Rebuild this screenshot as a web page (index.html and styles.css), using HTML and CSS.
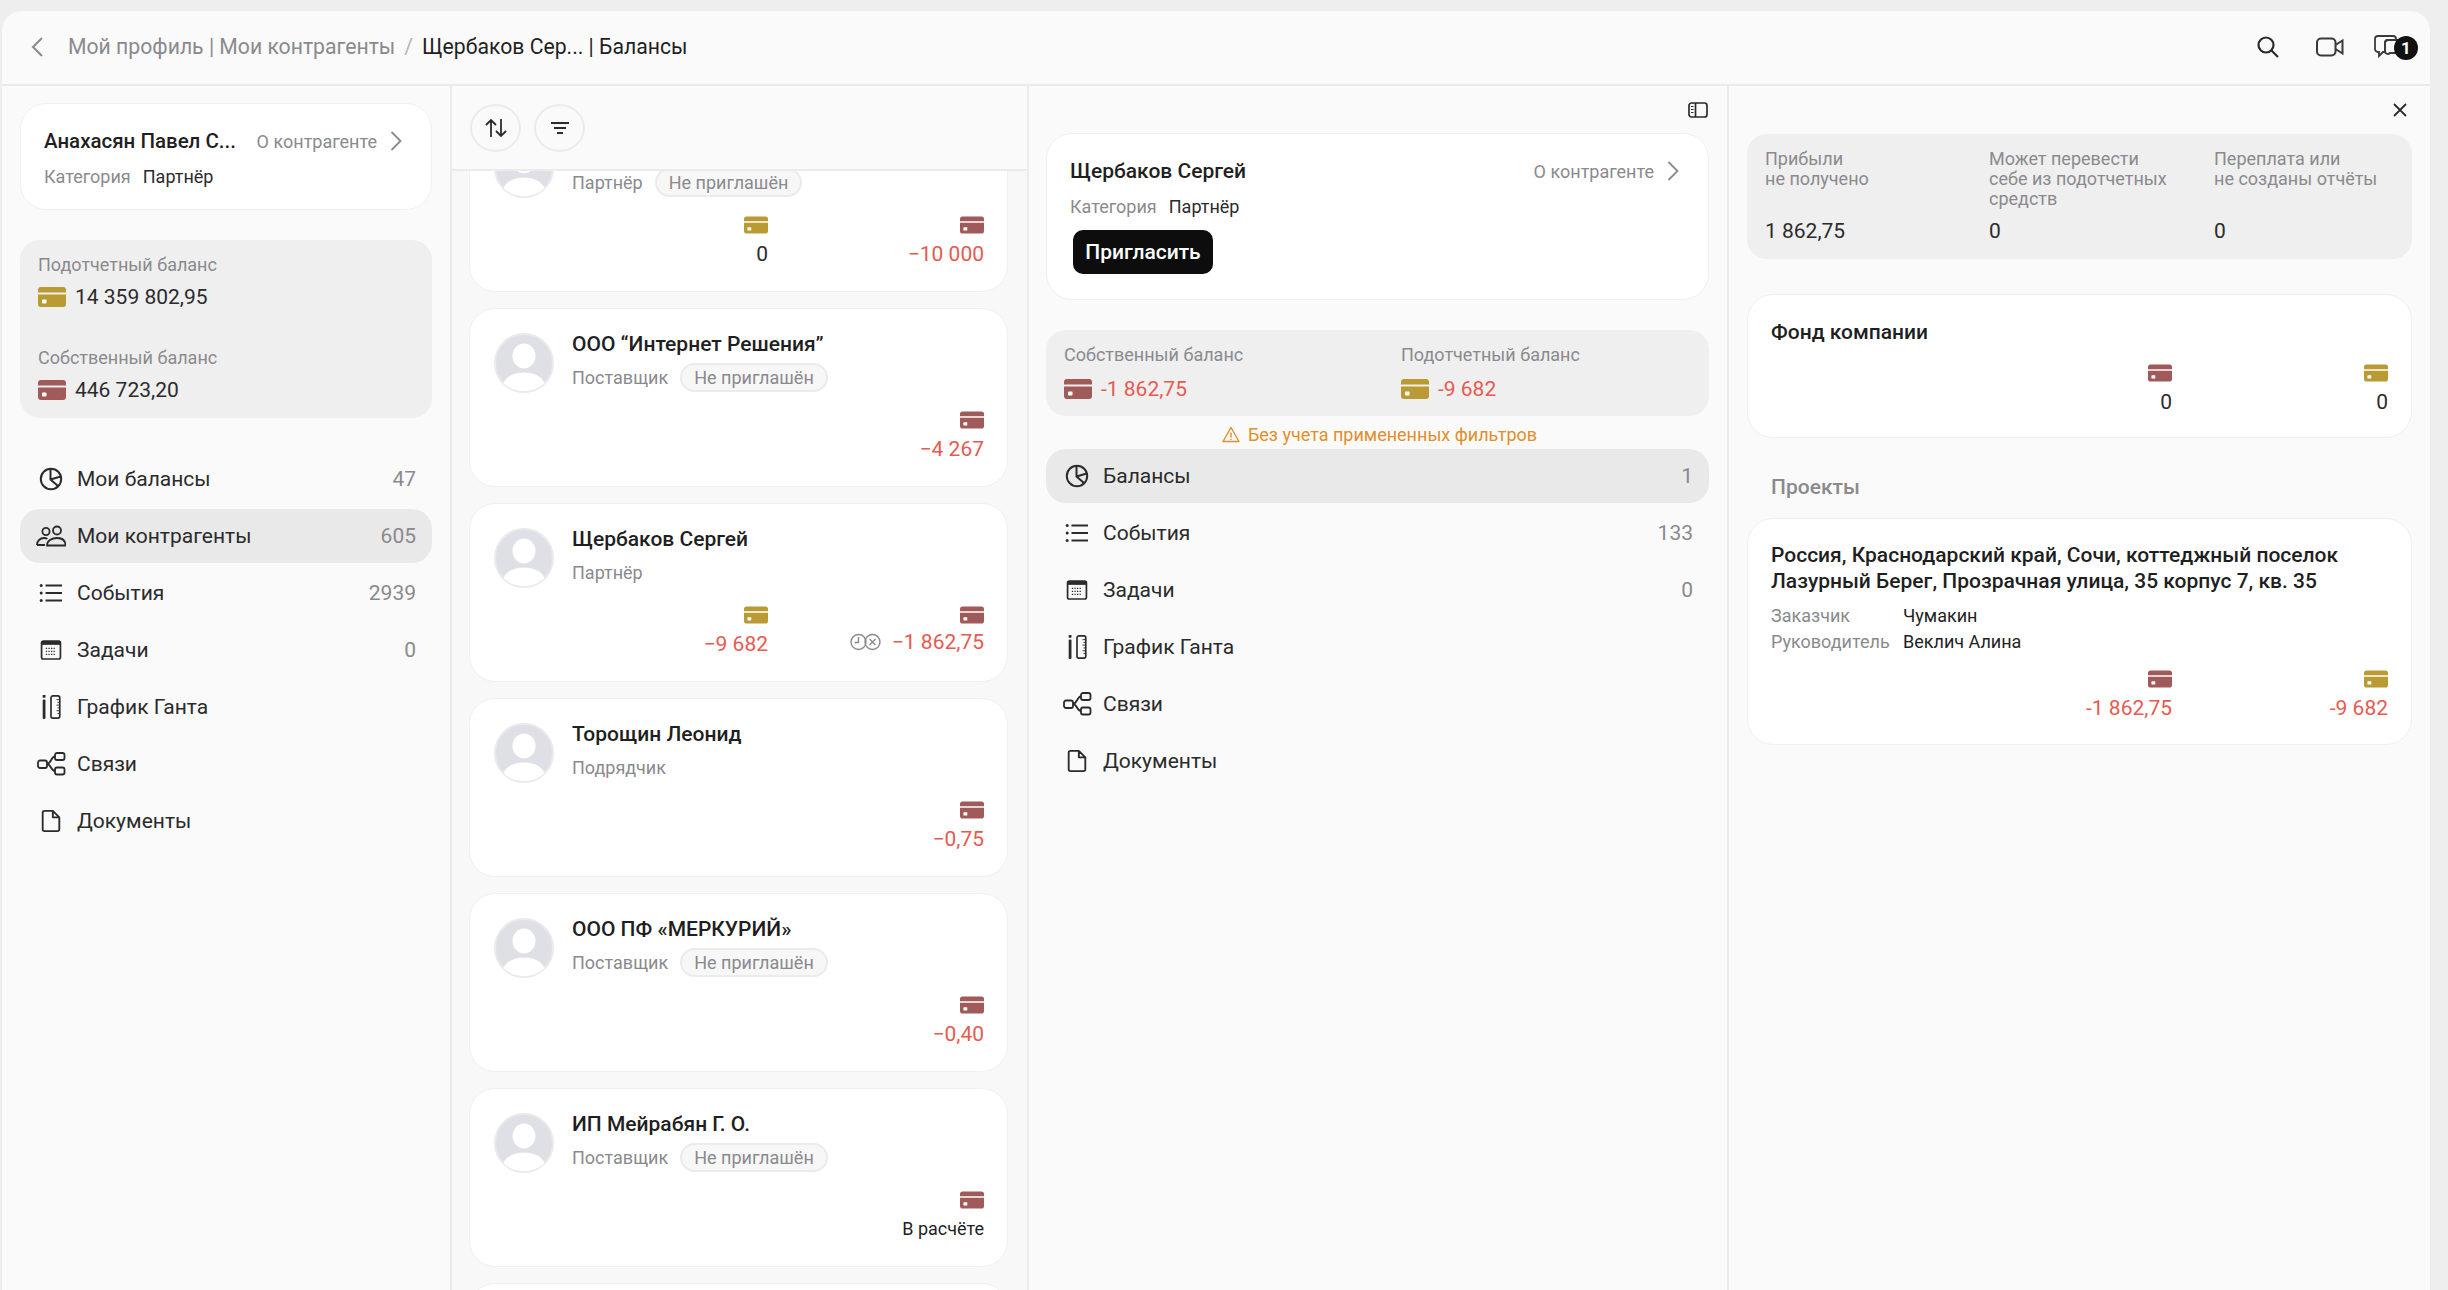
FILE: index.html
```html
<!DOCTYPE html>
<html lang="ru">
<head>
    <meta charset="utf-8">
    <title>Балансы</title>
    <link rel="stylesheet" href="styles.css">
</head>
<body>
    <svg class="sprite" width="0" height="0">
        <symbol id="i-card" viewBox="0 0 28 20">
            <path d="M3 0h22a3 3 0 0 1 3 3v2.5H0V3a3 3 0 0 1 3-3z" fill="currentColor"/>
            <path d="M0 7.5h28V17a3 3 0 0 1-3 3H3a3 3 0 0 1-3-3z" fill="currentColor"/>
            <rect x="4" y="12.5" width="4.5" height="4" rx="0.8" fill="#fff"/>
        </symbol>
        <symbol id="i-pie" viewBox="0 0 24 24">
            <g fill="none" stroke="currentColor" stroke-width="2">
                <circle cx="12" cy="12" r="10.2"/>
                <path d="M11.5 2v10.5l7.5 6.5M11.5 12.5l10.2-3"/>
            </g>
        </symbol>
        <symbol id="i-people" viewBox="0 0 30 24">
            <g fill="none" stroke="currentColor" stroke-width="1.8">
                <circle cx="10" cy="7.5" r="3.6"/>
                <circle cx="21" cy="6.5" r="4"/>
                <path d="M1 21c0-4 3-7 7-7 1.4 0 2.6.3 3.4.9M1 21h8"/>
                <path d="M11 21.500c0-4.500 4.500-7.500 10-7.500s8.500 3 8.500 7.500z"/>
            </g>
        </symbol>
        <symbol id="i-list" viewBox="0 0 24 24">
            <g fill="currentColor">
                <circle cx="2.200" cy="4.500" r="1.500"/>
                <circle cx="2.200" cy="12" r="1.500"/>
                <circle cx="2.200" cy="19.500" r="1.500"/>
                <rect x="6.500" y="3.500" width="16.500" height="2"/>
                <rect x="6.500" y="11" width="16.500" height="2"/>
                <rect x="6.500" y="18.500" width="16.500" height="2"/>
            </g>
        </symbol>
        <symbol id="i-cal" viewBox="-2 -2 28 28">
            <path d="M3 1.500h18a2 2 0 0 1 2 2v17a2 2 0 0 1-2 2H3a2 2 0 0 1-2-2v-17a2 2 0 0 1 2-2z" fill="none" stroke="currentColor" stroke-width="2"/>
            <rect x="1" y="1.500" width="22" height="4.500" fill="currentColor"/>
            <path d="M6 10h12M6 13.500h12M6 17h12" stroke="currentColor" stroke-width="1.500" stroke-dasharray="1.500 1.500" fill="none"/>
        </symbol>
        <symbol id="i-gantt" viewBox="0 0 24 26">
            <rect x="3" y="0" width="3" height="3" fill="currentColor"/>
            <rect x="3" y="5" width="3" height="21" rx="1" fill="currentColor"/>
            <rect x="12" y="1" width="9.500" height="24" rx="2" fill="none" stroke="currentColor" stroke-width="1.800"/>
            <path d="M21 5h-3M21 8h-2M21 11h-3M21 14h-2M21 17h-3M21 20h-2" stroke="currentColor" stroke-width="1" fill="none"/>
        </symbol>
        <symbol id="i-links" viewBox="0 0 28 24">
            <g fill="none" stroke="currentColor" stroke-width="1.800">
                <rect x="1" y="8.500" width="9" height="7.500" rx="2"/>
                <rect x="18" y="1" width="9.500" height="7" rx="2"/>
                <rect x="18" y="15.500" width="9.500" height="7" rx="2"/>
                <path d="M10 12c4 0 4-7.500 8-7.500M10 12c4 0 4 7 8 7"/>
            </g>
        </symbol>
        <symbol id="i-doc" viewBox="-1 -1 26 26">
            <path d="M5 1h9l7 7v13a2 2 0 0 1-2 2H5a2 2 0 0 1-2-2V3a2 2 0 0 1 2-2zM14 1v7h7" fill="none" stroke="currentColor" stroke-width="2" stroke-linejoin="round"/>
        </symbol>
        <symbol id="i-chev" viewBox="0 0 12 20">
            <path d="M1.500 1l9 9-9 9" fill="none" stroke="currentColor" stroke-width="1.800"/>
        </symbol>
        <symbol id="i-avatar" viewBox="0 0 60 60">
            <circle cx="30" cy="30" r="29" fill="#dfdfe6" stroke="#eaeaea" stroke-width="2"/>
            <ellipse cx="30" cy="23" rx="11.500" ry="12.500" fill="#fff"/>
            <path d="M9.500 50c3-7 11-10.500 20.500-10.500S47.500 43 50.500 50C45 55.500 38 58 30 58S15 55.500 9.500 50z" fill="#fff"/>
        </symbol>
    </svg>

    <div class="window">
        <header class="topbar">
            <svg class="back" width="12" height="20"><path d="M11 1l-9 9 9 9" fill="none" stroke="#8a8a8e" stroke-width="2"/></svg>
            <span class="crumb">Мой профиль | Мои контрагенты</span>
            <span class="crumb-sep">/</span>
            <span class="crumb-now">Щербаков Сер... | Балансы</span>
            <div class="topbar-icons">
                <svg class="top-search" width="22" height="22" viewBox="0 0 22 22"><g fill="none" stroke="#2b2b2b" stroke-width="2.200"><circle cx="9" cy="9" r="7.500"/><path d="M14.500 14.500l6.500 6.500"/></g></svg>
                <svg width="28" height="20" viewBox="0 0 28 20"><g fill="none" stroke="#3a3a3a" stroke-width="2"><rect x="1" y="1.500" width="18.500" height="17" rx="4"/><path d="M19.500 8l7-4.500v13l-7-4.500"/></g></svg>
                <div class="chat">
                    <svg width="32" height="24" viewBox="0 0 32 24"><g fill="none" stroke="#3a3a3a" stroke-width="1.800"><path d="M4 1h15a3 3 0 0 1 3 3v1H14a3 3 0 0 0-3 3v9H9l-4 4v-4H4a3 3 0 0 1-3-3V4a3 3 0 0 1 3-3z"/><path d="M14 5h12a3 3 0 0 1 3 3v7a3 3 0 0 1-3 3h-10a3 3 0 0 1-5-3V8a3 3 0 0 1 3-3z"/></g></svg>
                    <span class="chat-badge">1</span>
                </div>
            </div>
        </header>

        <div class="columns">
            <aside class="sidebar">
                <div class="card who">
                    <div class="who-top">
                        <b class="who-name">Анахасян Павел С...</b>
                        <span class="who-link">О контрагенте</span>
                        <svg class="chev"><use href="#i-chev"/></svg>
                    </div>
                    <div class="who-cat"><span class="gray">Категория</span><span>Партнёр</span></div>
                </div>

                <div class="panel side-bal">
                    <div class="side-bal-item">
                        <div class="gray">Подотчетный баланс</div>
                        <div class="money"><svg class="card-ico gold"><use href="#i-card"/></svg>14 359 802,95</div>
                    </div>
                    <div class="side-bal-item">
                        <div class="gray">Собственный баланс</div>
                        <div class="money"><svg class="card-ico maroon"><use href="#i-card"/></svg>446 723,20</div>
                    </div>
                </div>

                <nav class="nav side-nav">
                    <a class="nav-item"><svg class="nav-ico"><use href="#i-pie"/></svg>Мои балансы<em>47</em></a>
                    <a class="nav-item active"><svg class="nav-ico"><use href="#i-people"/></svg>Мои контрагенты<em>605</em></a>
                    <a class="nav-item"><svg class="nav-ico"><use href="#i-list"/></svg>События<em>2939</em></a>
                    <a class="nav-item"><svg class="nav-ico"><use href="#i-cal"/></svg>Задачи<em>0</em></a>
                    <a class="nav-item"><svg class="nav-ico"><use href="#i-gantt"/></svg>График Ганта</a>
                    <a class="nav-item"><svg class="nav-ico"><use href="#i-links"/></svg>Связи</a>
                    <a class="nav-item"><svg class="nav-ico"><use href="#i-doc"/></svg>Документы</a>
                </nav>
            </aside>

            <section class="contractors">
                <div class="tools">
                    <button class="round-btn"><svg width="22" height="20" viewBox="0 0 22 20"><path d="M6 19V2M1 7l5-5 5 5M16 1v17M11 13l5 5 5-5" fill="none" stroke="#2b2b2b" stroke-width="1.800"/></svg></button>
                    <button class="round-btn"><svg width="18" height="14" viewBox="0 0 18 14"><path d="M0 2h18M3 7h12M6 12h6" fill="none" stroke="#2b2b2b" stroke-width="1.800"/></svg></button>
                </div>
                <div class="list">
                    <article class="card person first">
                        <div class="person-head">
                            <svg class="avatar"><use href="#i-avatar"/></svg>
                            <div>
                                <div class="person-name">&nbsp;</div>
                                <div class="person-sub"><span>Партнёр</span><span class="chip">Не приглашён</span></div>
                            </div>
                        </div>
                        <div class="bals">
                            <div class="bal"><svg class="card-sm gold"><use href="#i-card"/></svg><span>0</span></div>
                            <div class="bal"><svg class="card-sm maroon"><use href="#i-card"/></svg><span class="red">−10 000</span></div>
                        </div>
                    </article>
                    <article class="card person">
                        <div class="person-head">
                            <svg class="avatar"><use href="#i-avatar"/></svg>
                            <div>
                                <div class="person-name">ООО “Интернет Решения”</div>
                                <div class="person-sub"><span>Поставщик</span><span class="chip">Не приглашён</span></div>
                            </div>
                        </div>
                        <div class="bals">
                            <div class="bal"><svg class="card-sm maroon"><use href="#i-card"/></svg><span class="red">−4 267</span></div>
                        </div>
                    </article>
                    <article class="card person">
                        <div class="person-head">
                            <svg class="avatar"><use href="#i-avatar"/></svg>
                            <div>
                                <div class="person-name">Щербаков Сергей</div>
                                <div class="person-sub"><span>Партнёр</span></div>
                            </div>
                        </div>
                        <div class="bals">
                            <div class="bal"><svg class="card-sm gold"><use href="#i-card"/></svg><span class="red">−9 682</span></div>
                            <div class="bal">
                                <svg class="card-sm maroon"><use href="#i-card"/></svg>
                                <span class="red with-flags">
                                    <svg class="flags" width="31" height="18" viewBox="0 0 31 18"><g fill="none" stroke="#8a8a8e" stroke-width="1.400"><circle cx="8.500" cy="9" r="7.500"/><path d="M8.500 4v5.500H4.500"/><circle cx="22.500" cy="9" r="7.500"/><path d="M19.500 6l6 6M25.500 6l-6 6"/></g></svg>
                                    −1 862,75
                                </span>
                            </div>
                        </div>
                    </article>
                    <article class="card person">
                        <div class="person-head">
                            <svg class="avatar"><use href="#i-avatar"/></svg>
                            <div>
                                <div class="person-name">Торощин Леонид</div>
                                <div class="person-sub"><span>Подрядчик</span></div>
                            </div>
                        </div>
                        <div class="bals">
                            <div class="bal"><svg class="card-sm maroon"><use href="#i-card"/></svg><span class="red">−0,75</span></div>
                        </div>
                    </article>
                    <article class="card person">
                        <div class="person-head">
                            <svg class="avatar"><use href="#i-avatar"/></svg>
                            <div>
                                <div class="person-name">ООО ПФ «МЕРКУРИЙ»</div>
                                <div class="person-sub"><span>Поставщик</span><span class="chip">Не приглашён</span></div>
                            </div>
                        </div>
                        <div class="bals">
                            <div class="bal"><svg class="card-sm maroon"><use href="#i-card"/></svg><span class="red">−0,40</span></div>
                        </div>
                    </article>
                    <article class="card person">
                        <div class="person-head">
                            <svg class="avatar"><use href="#i-avatar"/></svg>
                            <div>
                                <div class="person-name">ИП Мейрабян Г. О.</div>
                                <div class="person-sub"><span>Поставщик</span><span class="chip">Не приглашён</span></div>
                            </div>
                        </div>
                        <div class="bals">
                            <div class="bal"><svg class="card-sm maroon"><use href="#i-card"/></svg><span class="calc">В расчёте</span></div>
                        </div>
                    </article>
                    <article class="card person"></article>
                </div>
            </section>

            <section class="details">
                <div class="mini-bar">
                    <svg width="20" height="16" viewBox="0 0 20 16"><g fill="none" stroke="#2b2b2b" stroke-width="1.700"><rect x="1" y="1" width="18" height="14" rx="2.500"/><path d="M7.500 1v14"/><path d="M3 4.500h2.500M3 7.500h2.500M3 10.500h2.500" stroke-width="1.200"/></g></svg>
                </div>
                <div class="card who-big">
                    <div class="who-top">
                        <b class="who-name big-name">Щербаков Сергей</b>
                        <span class="who-link">О контрагенте</span>
                        <svg class="chev"><use href="#i-chev"/></svg>
                    </div>
                    <div class="who-cat"><span class="gray">Категория</span><span>Партнёр</span></div>
                    <button class="invite">Пригласить</button>
                </div>
                <div class="panel pair">
                    <div>
                        <div class="gray">Собственный баланс</div>
                        <div class="money red"><svg class="card-ico maroon"><use href="#i-card"/></svg>-1 862,75</div>
                    </div>
                    <div>
                        <div class="gray">Подотчетный баланс</div>
                        <div class="money red"><svg class="card-ico gold"><use href="#i-card"/></svg>-9 682</div>
                    </div>
                </div>
                <div class="warn">
                    <svg width="18" height="17" viewBox="0 0 18 17"><path d="M9 1.500L17 15.500H1zM9 6.500v5M9 12.800v1.200" fill="none" stroke="#e08f2a" stroke-width="1.400" stroke-linejoin="round"/></svg>
                    Без учета примененных фильтров
                </div>
                <nav class="nav">
                    <a class="nav-item active"><svg class="nav-ico"><use href="#i-pie"/></svg>Балансы<em>1</em></a>
                    <a class="nav-item"><svg class="nav-ico"><use href="#i-list"/></svg>События<em>133</em></a>
                    <a class="nav-item"><svg class="nav-ico"><use href="#i-cal"/></svg>Задачи<em>0</em></a>
                    <a class="nav-item"><svg class="nav-ico"><use href="#i-gantt"/></svg>График Ганта</a>
                    <a class="nav-item"><svg class="nav-ico"><use href="#i-links"/></svg>Связи</a>
                    <a class="nav-item"><svg class="nav-ico"><use href="#i-doc"/></svg>Документы</a>
                </nav>
            </section>

            <section class="funds">
                <div class="mini-bar close-bar">
                    <svg width="16" height="16" viewBox="0 0 16 16"><path d="M2 2l12 12M14 2L2 14" fill="none" stroke="#2b2b2b" stroke-width="1.800"/></svg>
                </div>
                <div class="panel triple">
                    <div class="triple-cell">
                        <div class="gray triple-label">Прибыли<br>не получено</div>
                        <div class="triple-val">1 862,75</div>
                    </div>
                    <div class="triple-cell">
                        <div class="gray triple-label">Может перевести<br>себе из подотчетных<br>средств</div>
                        <div class="triple-val">0</div>
                    </div>
                    <div class="triple-cell">
                        <div class="gray triple-label">Переплата или<br>не созданы отчёты</div>
                        <div class="triple-val">0</div>
                    </div>
                </div>
                <div class="card fund">
                    <div class="fund-title">Фонд компании</div>
                    <div class="bals">
                        <div class="bal"><svg class="card-sm maroon"><use href="#i-card"/></svg><span>0</span></div>
                        <div class="bal"><svg class="card-sm gold"><use href="#i-card"/></svg><span>0</span></div>
                    </div>
                </div>
                <div class="projects-title">Проекты</div>
                <div class="card project">
                    <div class="fund-title">Россия, Краснодарский край, Сочи, коттеджный поселок<br>Лазурный Берег, Прозрачная улица, 35 корпус 7, кв. 35</div>
                    <dl class="project-meta">
                        <dt>Заказчик</dt><dd>Чумакин</dd>
                        <dt>Руководитель</dt><dd>Веклич Алина</dd>
                    </dl>
                    <div class="bals">
                        <div class="bal"><svg class="card-sm maroon"><use href="#i-card"/></svg><span class="red">-1 862,75</span></div>
                        <div class="bal"><svg class="card-sm gold"><use href="#i-card"/></svg><span class="red">-9 682</span></div>
                    </div>
                </div>
            </section>
        </div>
    </div>
</body>
</html>
```
FILE: styles.css
```css
* {
    box-sizing: border-box;
}

html,
body {
    height: 100%;
}

body {
    margin: 0;
    background: #eeeeee;
    color: #2b2b2b;
    font-family: Roboto, "Liberation Sans", sans-serif;
    font-size: 18px;
    overflow: hidden;
}

.sprite {
    position: absolute;
}

.window {
    display: flex;
    flex-direction: column;
    width: 2428px;
    height: 1279px;
    margin: 11px 0 0 2px;
    background: #fafafa;
    border-radius: 20px 20px 0 0;
    overflow: hidden;
}

.gray {
    color: #8a8a8e;
}

.red {
    color: #e8594f;
}

.gold {
    color: #b99a33;
}

.maroon {
    color: #a05a5a;
}

/* TOP BAR */
.topbar {
    display: flex;
    align-items: center;
    flex: none;
    height: 75px;
    padding: 0 0 2px 29px;
    border-bottom: 2px solid #ebebeb;
    font-size: 21.200px;
}

.back {
    margin-right: 25px;
}

.crumb {
    color: #8a8a8e;
}

.crumb-sep {
    margin: 0 9px;
    color: #b5b5b8;
}

.crumb-now {
    color: #1f1f1f;
}

.topbar-icons {
    display: flex;
    align-items: center;
    gap: 30px;
    margin-left: auto;
    padding-right: 12px;
}

.top-search {
    margin-right: 7px;
}

.chat {
    display: flex;
    width: 44px;
    position: relative;
}

.chat-badge {
    position: absolute;
    top: 1px;
    right: 0;
    width: 24px;
    height: 24px;
    border-radius: 50%;
    background: #111;
    color: #fff;
    font-size: 17px;
    font-weight: 700;
    line-height: 24px;
    text-align: center;
}

/* COLUMNS */
.columns {
    display: flex;
    flex: 1;
    min-height: 0;
}

.card {
    background: #fff;
    border: 1.5px solid #f0f0f0;
    border-radius: 26px;
}

.panel {
    background: #efefef;
    border-radius: 20px;
}

.sidebar {
    flex: none;
    width: 450px;
    padding: 17px 18px 0;
    border-right: 2px solid #ebebeb;
}

.contractors {
    display: flex;
    flex-direction: column;
    flex: none;
    width: 577px;
    border-right: 2px solid #ebebeb;
    background: #f8f8f8;
}

.details {
    flex: none;
    width: 700px;
    padding: 0 18px 0 17px;
    border-right: 2px solid #ebebeb;
}

.funds {
    flex: 1;
    padding: 0 18px;
}

/* CONTRACTOR CARD ON TOP */
.who {
    height: 107px;
    padding: 24px 24px 0 23px;
}

.who-top {
    display: flex;
    align-items: center;
    height: 26px;
}

.who-name {
    flex: none;
    font-size: 20.500px;
    font-weight: 500;
    color: #1f1f1f;
}

.big-name {
    font-size: 21px;
}

.who-link {
    margin-left: auto;
    color: #8a8a8e;
    white-space: nowrap;
}

.chev {
    flex: none;
    width: 12px;
    height: 20px;
    margin-left: 13px;
    margin-right: 5px;
    color: #8a8a8e;
}

.who-cat {
    display: flex;
    gap: 12px;
    margin-top: 10px;
    line-height: 26px;
}

/* BALANCE PANEL IN SIDEBAR */
.side-bal {
    height: 178px;
    margin-top: 30px;
    padding: 14px 18px;
}

.side-bal-item + .side-bal-item {
    margin-top: 38px;
}

.side-bal-item .gray {
    line-height: 22px;
}

.money {
    display: flex;
    align-items: center;
    margin-top: 9px;
    font-size: 21px;
    line-height: 24px;
}

.card-ico {
    width: 28px;
    height: 20px;
    margin-right: 9px;
}

/* NAV */
.nav {
    display: flex;
    flex-direction: column;
    gap: 3px;
}

.side-nav {
    margin-top: 34px;
}

.nav-item {
    display: flex;
    align-items: center;
    height: 54px;
    padding: 0 16px;
    border-radius: 20px;
    font-size: 21px;
    color: #2b2b2b;
}

.nav-item.active {
    background: #e9e9e9;
}

.nav-item em {
    margin-left: auto;
    color: #8a8a8e;
    font-style: normal;
}

.nav-ico {
    flex: none;
    width: 30px;
    height: 24px;
    margin-right: 11px;
}

/* CONTRACTOR LIST */
.tools {
    display: flex;
    flex: none;
    gap: 13px;
    align-items: center;
    height: 85px;
    padding-left: 18px;
    background: #fafafa;
    border-bottom: 2px solid #ebebeb;
}

.round-btn {
    display: flex;
    align-items: center;
    justify-content: center;
    width: 51px;
    height: 48px;
    padding: 0;
    background: none;
    border: 2px solid #ebebeb;
    border-radius: 50%;
}

.list {
    display: flex;
    flex-direction: column;
    flex: 1;
    gap: 16px;
    min-height: 0;
    padding: 0 19px 0 17px;
    overflow: hidden;
}

.person {
    flex: none;
    height: 179px;
    padding: 22px 23px 0 24px;
}

.person.first {
    margin-top: -58px;
}

.person-head {
    display: flex;
    gap: 18px;
}

.avatar {
    flex: none;
    width: 60px;
    height: 60px;
    margin-top: 2px;
}

.person-name {
    font-size: 21px;
    font-weight: 500;
    line-height: 26px;
    color: #1f1f1f;
}

.person-sub {
    display: flex;
    align-items: center;
    gap: 12px;
    height: 29px;
    margin-top: 6px;
    color: #8a8a8e;
}

.chip {
    height: 29px;
    padding: 0 12px;
    background: #f7f7f7;
    border: 2px solid #ebebeb;
    border-radius: 15px;
    line-height: 25px;
}

.bals {
    display: flex;
    justify-content: flex-end;
    margin-top: 18px;
}

.bal {
    display: flex;
    flex-direction: column;
    align-items: flex-end;
    width: 216px;
    font-size: 21px;
    line-height: 26px;
}

.card-sm {
    width: 24px;
    height: 18px;
    margin-bottom: 7px;
}

.with-flags {
    display: flex;
    align-items: center;
    gap: 11px;
    margin-top: -2px;
}

.calc {
    font-size: 18px;
    color: #1f1f1f;
}

/* DETAILS */
.mini-bar {
    display: flex;
    align-items: center;
    justify-content: flex-end;
    height: 47px;
    padding-right: 1px;
}

.who-big {
    height: 167px;
    padding: 24px 24px 0 23px;
}

.invite {
    display: block;
    width: 140px;
    height: 44px;
    margin: 10px 0 0 3px;
    background: #0d0d0d;
    border: 0;
    border-radius: 10px;
    color: #fff;
    font-family: inherit;
    font-size: 21px;
    font-weight: 500;
}

.pair {
    display: grid;
    grid-template-columns: 337px 1fr;
    height: 86px;
    margin-top: 30px;
    padding: 14px 18px 0;
}

.pair .money {
    margin-top: 12px;
}

.warn {
    display: flex;
    align-items: center;
    justify-content: center;
    gap: 8px;
    height: 33px;
    padding-top: 3px;
    padding-left: 4px;
    color: #e08f2a;
}

/* FUNDS */
.close-bar {
    height: 48px;
    padding-right: 4px;
}

.triple {
    display: grid;
    grid-template-columns: 224px 225px 1fr;
    height: 125px;
    padding: 15px 18px 0;
}

.triple-cell {
    display: flex;
    flex-direction: column;
}

.triple-label {
    height: 66px;
    font-size: 18px;
    line-height: 20px;
}

.triple-val {
    font-size: 21px;
    line-height: 24px;
    margin-top: 4px;
}

.fund {
    height: 144px;
    margin-top: 35px;
    padding: 24px 23px 0;
}

.fund-title {
    font-size: 21px;
    font-weight: 500;
    line-height: 26px;
    color: #1f1f1f;
}

.fund .bals {
    margin-top: 19px;
}

.projects-title {
    margin: 37px 0 19px;
    padding-left: 24px;
    color: #8a8a8e;
    font-size: 21px;
    font-weight: 500;
    line-height: 24px;
}

.project {
    height: 227px;
    padding: 23px 23px 0;
}

.project-meta {
    display: grid;
    grid-template-columns: 132px 1fr;
    margin: 9px 0 0;
    font-size: 18px;
    line-height: 26px;
}

.project-meta dt {
    color: #8a8a8e;
}

.project-meta dd {
    margin: 0;
    color: #1f1f1f;
}

.project .bals {
    margin-top: 15px;
}
```
